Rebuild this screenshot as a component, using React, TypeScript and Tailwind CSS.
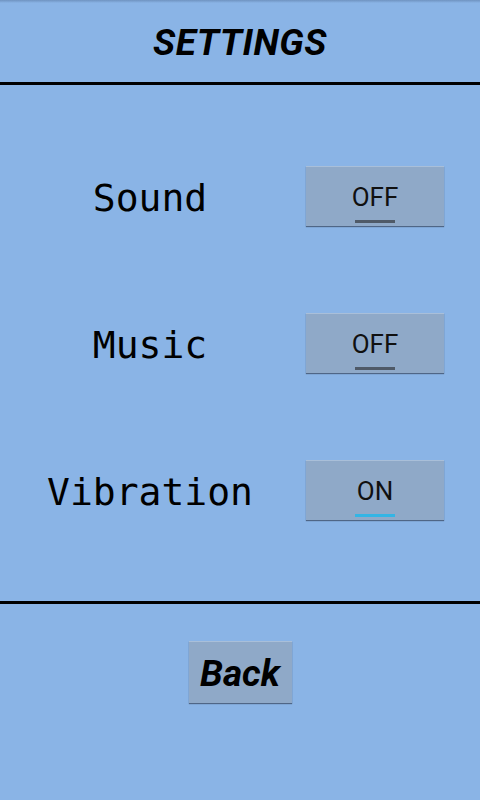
import { useState } from "react";

const rows = [
  { label: "Sound", on: false },
  { label: "Music", on: false },
  { label: "Vibration", on: true },
];

const Toggle = ({ on, onClick }: { on: boolean; onClick: () => void }) => (
  <button
    onClick={onClick}
    className="ml-[6px] w-[138px] h-[60px] bg-[#8fa9c8] border-t border-[#a9bfd9] shadow-[0_1px_1px_rgba(40,50,70,0.6)] flex flex-col items-center justify-center"
  >
    <span className="text-[26px] leading-none text-[#101010] font-['Roboto'] mt-[14px]">
      {on ? "ON" : "OFF"}
    </span>
    <span
      className={`mt-[10px] w-[40px] h-[3px] ${on ? "bg-[#33b5e5]" : "bg-[#4f5a68]"}`}
    />
  </button>
);

export default function App() {
  const [state, setState] = useState(rows.map((r) => r.on));

  return (
    <div className="w-[480px] h-[800px] bg-[#8ab4e6] flex flex-col">
      <div className="h-[3px] bg-gradient-to-b from-[#6f93c0] to-[#8ab4e6]" />
      <div className="h-[79px] flex items-center justify-center">
        <h1 className="text-[37px] font-bold italic text-black font-['Roboto'] tracking-[0.5px]">
          SETTINGS
        </h1>
      </div>
      <div className="h-[3px] bg-black" />
      <div className="h-[516px] flex flex-col py-[37px]">
        {rows.map((r, i) => (
          <div key={r.label} className="h-[147px] flex items-center">
            <div className="w-[300px] mt-[5px] text-center text-[38px] text-black font-['DejaVu_Sans_Mono',monospace]">
              {r.label}
            </div>
            <Toggle
              on={state[i]}
              onClick={() =>
                setState((s) => s.map((v, j) => (j === i ? !v : v)))
              }
            />
          </div>
        ))}
      </div>
      <div className="h-[3px] bg-black" />
      <div className="flex justify-center pt-[37px]">
        <button className="w-[103px] h-[62px] pt-[2px] bg-[#8fa9c8] border-t border-[#a9bfd9] shadow-[0_1px_1px_rgba(40,50,70,0.6)] text-[37px] font-bold italic text-black font-['Roboto']">
          Back
        </button>
      </div>
    </div>
  );
}
